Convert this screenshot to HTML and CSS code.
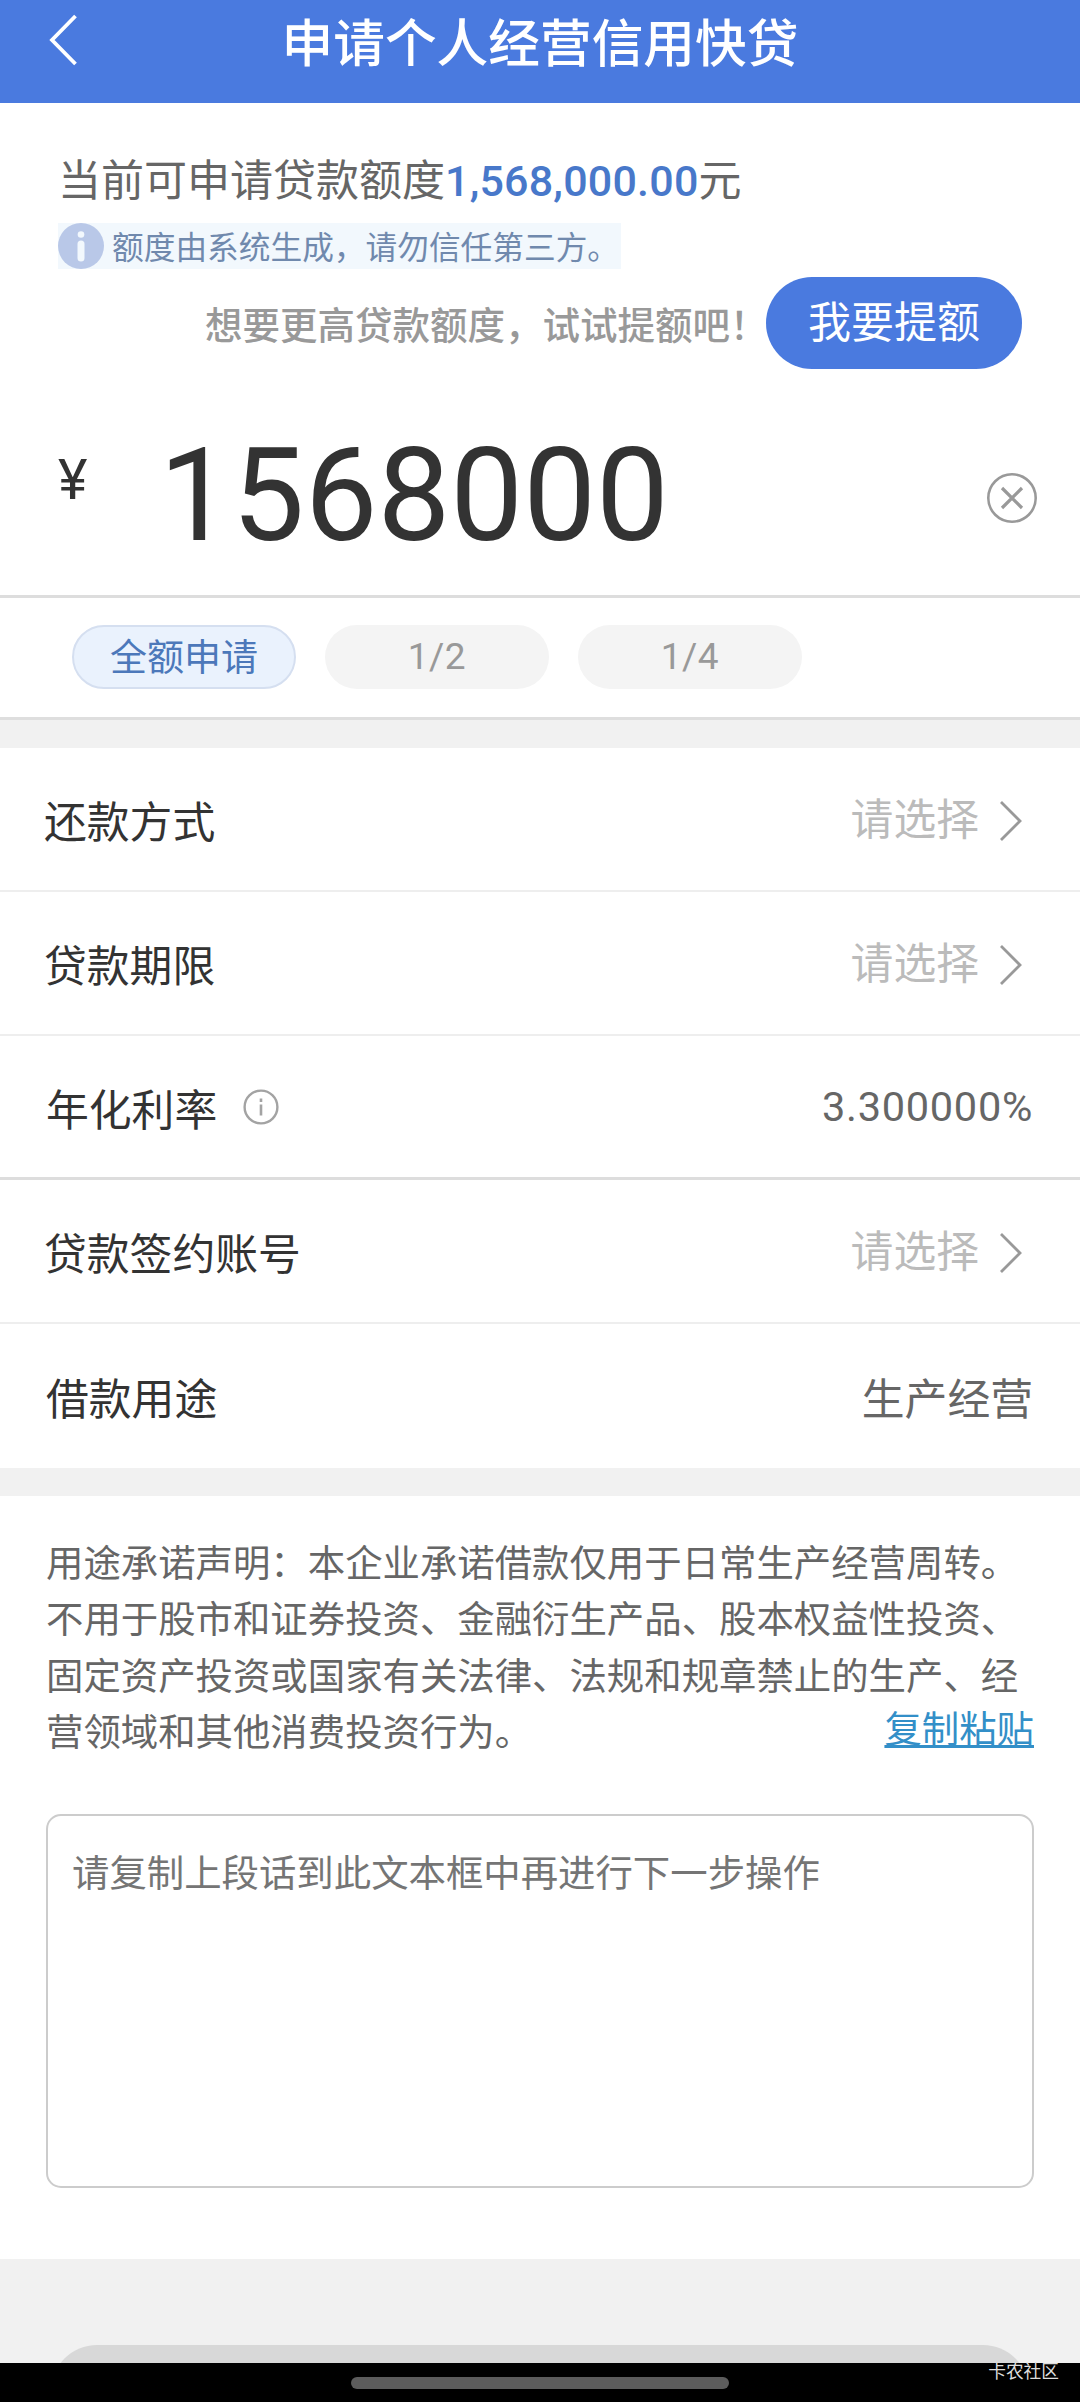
FILE: index.html
```html
<!DOCTYPE html>
<html lang="zh-CN">
<head>
<meta charset="utf-8">
<title>申请个人经营信用快贷</title>
<link rel="stylesheet" href="styles.css">
</head>
<body>
<div class="page">
  <header class="header">
    <svg class="back" width="30" height="54" viewBox="0 0 30 54" fill="none" stroke="#fff" stroke-width="3.8"><path d="M27.500 3 4 27l23.500 24"/></svg>
    <h1 class="title">申请个人经营信用快贷</h1>
  </header>

  <section class="quota">
    <p class="quota-line">当前可申请贷款额度<strong>1,568,000.00</strong>元</p>
    <div class="notice">
      <svg width="46" height="46" viewBox="0 0 46 46"><circle cx="23" cy="23" r="23" fill="#b9c8e8"/><circle cx="23" cy="11.5" r="3.3" fill="#f2f8fd"/><path d="M23 21v14" stroke="#f2f8fd" stroke-width="7" stroke-linecap="round"/></svg>
      <span>额度由系统生成，请勿信任第三方。</span>
    </div>
    <div class="raise">
      <span class="raise-text">想要更高贷款额度，试试提额吧！</span>
      <button class="raise-button">我要提额</button>
    </div>
  </section>

  <section class="amount">
    <span class="currency">¥</span>
    <span class="value">1568000</span>
    <svg class="clear" width="52" height="52" viewBox="0 0 52 52" fill="none" stroke="#999" stroke-width="2.6"><circle cx="26" cy="26" r="23.7"/><path d="m16 16 20 20M36 16 16 36" stroke-width="3.2"/></svg>
  </section>

  <section class="chips">
    <span class="chip active">全额申请</span>
    <span class="chip">1/2</span>
    <span class="chip">1/4</span>
  </section>

  <section class="rows">
    <div class="row">
      <span class="label">还款方式</span>
      <span class="choose">请选择</span>
      <svg class="arrow" width="24" height="42" viewBox="0 0 24 42"><path d="m2 2 19 19L2 40"/></svg>
    </div>
    <div class="row">
      <span class="label">贷款期限</span>
      <span class="choose">请选择</span>
      <svg class="arrow" width="24" height="42" viewBox="0 0 24 42"><path d="m2 2 19 19L2 40"/></svg>
    </div>
    <div class="row fixed strong">
      <span class="label">年化利率</span>
      <svg class="info" width="36" height="36" viewBox="0 0 36 36" fill="none" stroke="#a3a3a3" stroke-width="2.4"><circle cx="18" cy="18" r="16.4"/><path d="M18 15.500v11M18 9.500v3.400" stroke-width="2.6"/></svg>
      <span class="text rate">3.300000%</span>
    </div>
    <div class="row">
      <span class="label">贷款签约账号</span>
      <span class="choose">请选择</span>
      <svg class="arrow" width="24" height="42" viewBox="0 0 24 42"><path d="m2 2 19 19L2 40"/></svg>
    </div>
    <div class="row fixed">
      <span class="label">借款用途</span>
      <span class="text">生产经营</span>
    </div>
  </section>

  <section class="promise">
    <div class="statement">
      <p>用途承诺声明：本企业承诺借款仅用于日常生产经营周转。<br>不用于股市和证券投资、金融衍生产品、股本权益性投资、<br>固定资产投资或国家有关法律、法规和规章禁止的生产、经<br>营领域和其他消费投资行为。</p>
      <a class="copy">复制粘贴</a>
    </div>
    <div class="box">请复制上段话到此文本框中再进行下一步操作</div>
  </section>

  <div class="submit-area"><div class="submit"></div></div>

  <footer class="nav">
    <div class="handle"></div>
    <span class="mark">卡农社区</span>
  </footer>
</div>
</body>
</html>
```
FILE: styles.css
```css
* { box-sizing: border-box; }
body {
  margin: 0;
  background: #f1f1f1;
  font-family: Roboto, "Noto Sans CJK SC", sans-serif;
  color: #333;
}
p, h1 { margin: 0; }
svg { display: block; flex: none; }
span, p, a, h1 { white-space: nowrap; }
.page { width: 1080px; height: 2402px; overflow: hidden; display: flex; flex-direction: column; }
.page > * { flex: none; }

.header {
  height: 103px;
  padding: 13px 0 0 48px;
  background: #4a7adf;
  display: grid;
  grid-template-columns: 30px 1fr 78px;
}
.title { font-size: 51.7px; font-weight: 500; line-height: 64px; color: #fff; text-align: center; }

.quota { height: 317px; padding: 48px 58px 0; background: #fff; }
.quota-line { font-size: 43px; line-height: 60px; color: #666; }
.quota-line strong { font-weight: 500; color: #4878ca; letter-spacing: .2px; }
.notice {
  display: flex;
  align-items: center;
  gap: 8px;
  width: 563px;
  height: 46px;
  margin-top: 12px;
  background: #f2f8fd;
  font-size: 31.7px;
  line-height: 46px;
  color: #7089ad;
}
.notice span { padding-top: 5px; }
.raise { display: flex; justify-content: flex-end; margin-top: 8px; height: 92px; }
.raise-text { width: 561px; font-size: 37.5px; font-weight: 500; line-height: 92px; padding-top: 3px; color: #999; }
.raise-button {
  width: 256px;
  height: 92px;
  padding: 0;
  border: 0;
  border-radius: 46px;
  background: #4a7adf;
  color: #fff;
  font: 400 43px/92px Roboto, "Noto Sans CJK SC", sans-serif;
}

.amount {
  height: 178px;
  padding: 0 42px 0 58px;
  background: #fff;
  border-bottom: 3px solid #ddd;
  display: flex;
}
.currency { width: 101px; font-size: 56px; line-height: 60px; padding-top: 30px; }
.value { flex: 1; font-size: 129.6px; line-height: 150px; padding-top: 1px; color: #333; }
.clear { margin-top: 52px; }

.chips {
  height: 122px;
  padding: 27px 72px 0;
  background: #fff;
  border-bottom: 3px solid #dedede;
  display: flex;
  gap: 29px;
}
.chip {
  width: 224px;
  height: 64px;
  border-radius: 32px;
  background: #f4f4f4;
  color: #999;
  font-size: 37px;
  line-height: 64px;
  text-align: center;
  letter-spacing: .5px;
}
.chip.active { background: #eaf2fd; border: 2px solid #d5dff0; color: #4c78ba; letter-spacing: 0; line-height: 64px; }

.rows { margin-top: 28px; background: #fff; }
.row {
  height: 144px;
  padding: 1px 57px 0 44px;
  border-bottom: 2px solid #eee;
  display: flex;
  align-items: center;
  font-size: 42.8px;
  line-height: 60px;
}
.row.strong { border-bottom: 3px solid #ddd; }
.row:last-child { border-bottom: 0; }
.row.fixed { padding: 1px 47px 0 46px; }
.label { padding-top: 7px; }
.choose { margin-left: auto; color: #bbb; }
.arrow { margin-left: 20px; margin-top: 2px; fill: none; stroke: #999; stroke-width: 2.8; }
.info { margin-left: 26px; }
.text { margin-left: auto; color: #666; padding-top: 6px; }
.rate { font-size: 41.5px; padding-top: 0; letter-spacing: .7px; }

.promise { height: 763px; margin-top: 28px; padding: 40px 46px 0; background: #fff; }
.statement { display: flex; justify-content: space-between; align-items: flex-end; font-size: 37.4px; line-height: 56.3px; color: #666; }
.statement p { width: 0; flex: 1; }
.copy { color: #338fc8; text-decoration: underline; text-decoration-thickness: 3px; padding-bottom: 3px; }
.box {
  height: 374px;
  margin-top: 53px;
  padding: 31px 24px;
  border: 2px solid #ccc;
  border-radius: 15px;
  font-size: 37.4px;
  line-height: 54px;
  color: #757575;
}

.submit-area { height: 104px; padding: 86px 51px 0; overflow: hidden; }
.submit { height: 92px; border-radius: 46px; background: #d8d8d8; }

.nav { height: 39px; padding-left: 351px; background: #000; display: grid; grid-template-columns: 378px 1fr; }
.handle { height: 12px; margin-top: 14px; border-radius: 6px; background: #5c5c5c; }
.mark { justify-self: end; margin-right: 21px; font-size: 17.7px; line-height: 18px; color: #ddd; }
```
